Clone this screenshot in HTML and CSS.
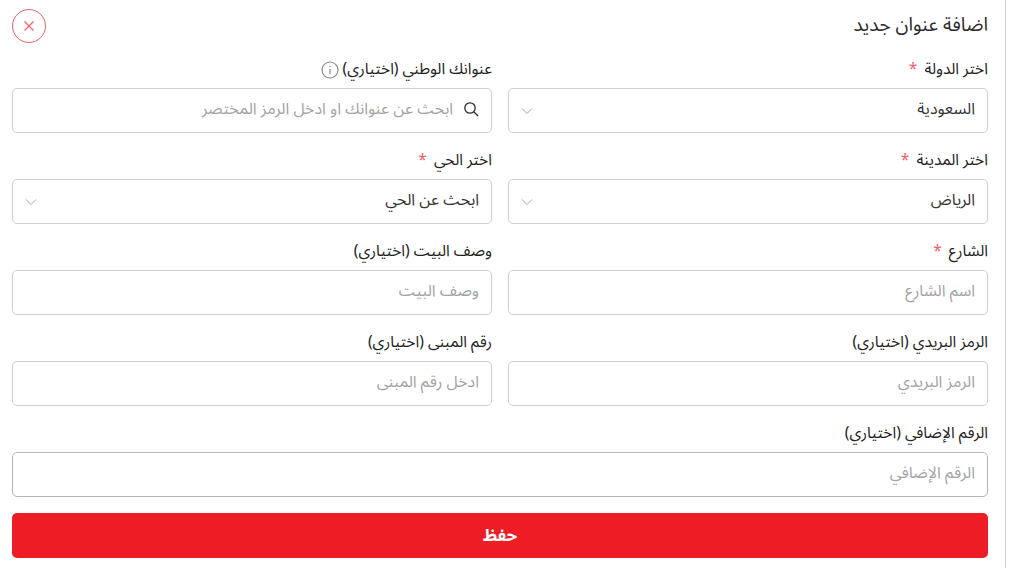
FILE: index.html
```html
<!DOCTYPE html>
<html lang="ar" dir="rtl">
<head>
  <meta charset="UTF-8">
  <title>اضافة عنوان جديد</title>
  <link rel="stylesheet" href="styles.css">
</head>
<body>
  <div class="container">
    <div class="header">
      <h2>اضافة عنوان جديد</h2>
      <button class="close">
        <svg width="12" height="12" viewBox="0 0 12 12"><path d="M1.5 1.5l9 9M10.5 1.5l-9 9" stroke="#f0606c" stroke-width="1.2" fill="none"/></svg>
      </button>
    </div>
    <div class="grid">
      <div class="field">
        <label>اختر الدولة <span class="req">*</span></label>
        <div class="box select"><span class="value">السعودية</span>
          <svg class="chev" width="12" height="8" viewBox="0 0 12 8"><path d="M1 1.5l5 5 5-5" stroke="#a8a8a8" stroke-width="1" fill="none"/></svg>
        </div>
      </div>
      <div class="field">
        <label>عنوانك الوطني (اختياري)
          <svg class="info" width="18" height="18" viewBox="0 0 18 18"><circle cx="9" cy="9" r="8" stroke="#8a8a8a" stroke-width="1.2" fill="none"/><path d="M9 8v5.2M9 4.8v1.4" stroke="#8a8a8a" stroke-width="1.2" fill="none"/></svg>
        </label>
        <div class="box search">
          <svg class="lens" width="16" height="16" viewBox="0 0 16 16"><circle cx="7" cy="7" r="5.2" stroke="#2b2b2b" stroke-width="1.3" fill="none"/><path d="M11 11l4 4" stroke="#2b2b2b" stroke-width="1.3" fill="none"/></svg>
          <span class="hint">ابحث عن عنوانك او ادخل الرمز المختصر</span>
        </div>
      </div>
      <div class="field">
        <label>اختر المدينة <span class="req">*</span></label>
        <div class="box select"><span class="value">الرياض</span>
          <svg class="chev" width="12" height="8" viewBox="0 0 12 8"><path d="M1 1.5l5 5 5-5" stroke="#a8a8a8" stroke-width="1" fill="none"/></svg>
        </div>
      </div>
      <div class="field">
        <label>اختر الحي <span class="req">*</span></label>
        <div class="box select"><span class="value">ابحث عن الحي</span>
          <svg class="chev" width="12" height="8" viewBox="0 0 12 8"><path d="M1 1.5l5 5 5-5" stroke="#a8a8a8" stroke-width="1" fill="none"/></svg>
        </div>
      </div>
      <div class="field">
        <label>الشارع <span class="req">*</span></label>
        <div class="box"><span class="hint">اسم الشارع</span></div>
      </div>
      <div class="field">
        <label>وصف البيت (اختياري)</label>
        <div class="box"><span class="hint">وصف البيت</span></div>
      </div>
      <div class="field">
        <label>الرمز البريدي (اختياري)</label>
        <div class="box"><span class="hint">الرمز البريدي</span></div>
      </div>
      <div class="field">
        <label>رقم المبنى (اختياري)</label>
        <div class="box"><span class="hint">ادخل رقم المبنى</span></div>
      </div>
      <div class="field wide">
        <label>الرقم الإضافي (اختياري)</label>
        <div class="box strong"><span class="hint">الرقم الإضافي</span></div>
      </div>
    </div>
    <button class="save">حفظ</button>
  </div>
</body>
</html>
```

FILE: styles.css
```css
html, body { margin: 0; height: 100%; overflow: hidden; }
body { font-family: "Noto Sans Arabic", "Noto Sans", "DejaVu Sans", sans-serif; background: #fff; color: #2b2b2b; }
.container { width: 976px; height: 100%; padding: 9px 17px 0 12px; margin-right: 3px; border-right: 1px solid #d4d4d4; }
.header { display: flex; justify-content: space-between; align-items: center; height: 34px; }
h2 { margin: 0 0 2px; font-size: 19px; font-weight: 400; }
.close { width: 34px; height: 34px; border: 1px solid #f0606c; border-radius: 50%; background: #fff; padding: 0; display: flex; align-items: center; justify-content: center; }
.grid { display: grid; grid-template-columns: 480px 480px; column-gap: 16px; row-gap: 14px; margin-top: 13px; }
.wide { grid-column: 1 / -1; }
label { display: flex; align-items: center; gap: 4px; height: 27px; font-size: 15.6px; color: #222; white-space: nowrap; }
.req { color: #f0606c; margin-right: 3px; }
.box { height: 45px; box-sizing: border-box; border: 1px solid #cfcfcf; border-radius: 5px; margin-top: 5px; padding: 0 12px; display: flex; align-items: center; gap: 10px; font-size: 16px; }
.box.strong { border-color: #b5b5b5; }
.select { justify-content: space-between; }
.hint, .value { padding-bottom: 4px; }
.lens { margin-bottom: 3px; }
.hint { color: #a3a3a3; }
.value { color: #333; }
.save { display: block; width: 976px; height: 45px; margin-top: 16px; border: 0; border-radius: 5px; background: #ee1c25; color: #fff; font-family: inherit; font-size: 17px; font-weight: 700; }
```
